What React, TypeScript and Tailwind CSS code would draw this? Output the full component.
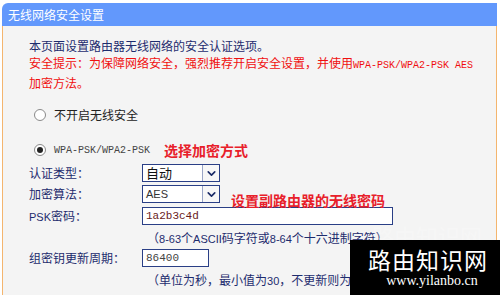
import { ChevronDown } from 'lucide-react';

const CJK = "font-['Noto_Sans_CJK_SC','Noto_Sans',sans-serif]";
const MONO = "font-['Liberation_Mono','DejaVu_Sans_Mono',monospace]";

function Radio({ checked }: { checked?: boolean }) {
  return (
    <span className="w-[12px] h-[12px] rounded-full border border-[#8a8a8a] bg-white flex items-center justify-center shrink-0">
      {checked && <span className="w-[6px] h-[6px] rounded-full bg-[#222]" />}
    </span>
  );
}

function Select({ value, mono }: { value: string; mono?: boolean }) {
  return (
    <div className="w-[78px] h-[18px] border border-[#2a3f86] bg-white flex shrink-0">
      <span className={`flex-1 pl-[3px] leading-[16px] ${mono ? 'text-[11px] text-[#333] font-[Liberation_Sans,sans-serif]' : 'text-[13px] text-[#111]'}`}>
        {value}
      </span>
      <span className="w-[17px] border-l border-[#9aa5c6] bg-[#f7f7f7] flex items-center justify-center">
        <ChevronDown size={13} strokeWidth={3} className="text-[#1a2a66]" />
      </span>
    </div>
  );
}

export default function App() {
  return (
    <div className={`relative w-[500px] h-[295px] overflow-hidden bg-white pt-[3px] pl-[2px] pr-[3px] ${CJK}`}>
      {/* title bar */}
      <div className="h-[23px] bg-[#6298fc] rounded-tl-[6px] pl-[6px] text-white text-[12px] leading-[23px]">
        无线网络安全设置
      </div>

      <div className="h-[269px] bg-[#f4f4f4] border-l border-r border-[#f4b56e] pl-[26px] text-[#1e2c6e] text-[12px]">
        <div className="pt-[11px] leading-[17px]">
          <p>本页面设置路由器无线网络的安全认证选项。</p>
          <p className="text-[#f01010]">
            安全提示：为保障网络安全，强烈推荐开启安全设置，并使用
            <span className={`${MONO} text-[10px]`}>WPA-PSK/WPA2-PSK AES</span>
            <br />
            加密方法。
          </p>
        </div>

        <div className="mt-[14px] h-[20px] pl-[5px] flex items-center gap-[8px]">
          <Radio />
          <span className="text-[12px] text-[#222]">不开启无线安全</span>
        </div>

        <div className="mt-[15px] h-[20px] pl-[5px] flex items-center gap-[8px]">
          <Radio checked />
          <span className={`${MONO} text-[10px] text-[#444]`}>WPA-PSK/WPA2-PSK</span>
          <span className="ml-[6px] text-[14px] font-bold text-[#e8202a]">选择加密方式</span>
        </div>

        <div className="mt-[4px] h-[18px] grid grid-cols-[113px_1fr] items-center">
          <span>认证类型：</span>
          <Select value="自动" />
        </div>

        <div className="mt-[3px] h-[18px] grid grid-cols-[113px_1fr] items-center">
          <span>加密算法：</span>
          <div className="h-[18px] flex items-center gap-[11px]">
            <Select value="AES" mono />
            <span className="text-[14px] font-bold text-[#e8202a] leading-[16px] translate-y-[6px] whitespace-nowrap">设置副路由器的无线密码</span>
          </div>
        </div>

        <div className="mt-[4px] h-[18px] grid grid-cols-[113px_1fr] items-center">
          <span>
            <span className="font-[Liberation_Sans,sans-serif] text-[11px]">PSK</span>密码：
          </span>
          <div className="w-[251px] h-[18px] border border-[#2a3f86] bg-white pl-[3px] leading-[16px] text-[11px] text-[#6a1a1a] font-[Liberation_Mono,monospace]">
            1a2b3c4d
          </div>
        </div>

        <div className="mt-[6px] h-[14px] pl-[118px] leading-[14px] text-[12px]">
          （<span className="font-[Liberation_Sans,sans-serif] text-[11px]">8-63</span>个
          <span className="font-[Liberation_Sans,sans-serif] text-[11px]">ASCII</span>码字符或
          <span className="font-[Liberation_Sans,sans-serif] text-[11px]">8-64</span>个十六进制字符）
        </div>

        <div className="mt-[4px] h-[18px] grid grid-cols-[113px_1fr] items-center">
          <span>组密钥更新周期：</span>
          <div className="w-[67px] h-[18px] border border-[#2a3f86] bg-white pl-[3px] leading-[16px] text-[11px] text-[#444] font-[Liberation_Mono,monospace]">
            86400
          </div>
        </div>

        <div className="mt-[6px] h-[14px] pl-[118px] leading-[14px] text-[12px]">
          （单位为秒，最小值为<span className="font-[Liberation_Sans,sans-serif] text-[11px]">30</span>，不更新则为
          <span className="font-[Liberation_Sans,sans-serif] text-[11px]">0</span>）
        </div>
      </div>

      {/* watermark */}
      <div className="absolute left-[372px] top-[224px] text-[22px] text-white/25 leading-[22px]">路由知识网</div>
      <div className="absolute left-[350px] top-[240px] w-[150px] h-[55px] bg-black flex flex-col items-center pt-[5px]">
        <span className="text-[23px] leading-[28px] text-white tracking-[1px] pl-[6px]">路由知识网</span>
        <span className="text-[14px] leading-[16px] text-white font-['Liberation_Serif',serif] pl-[14px]">www.yilanbo.cn</span>
      </div>
    </div>
  );
}
